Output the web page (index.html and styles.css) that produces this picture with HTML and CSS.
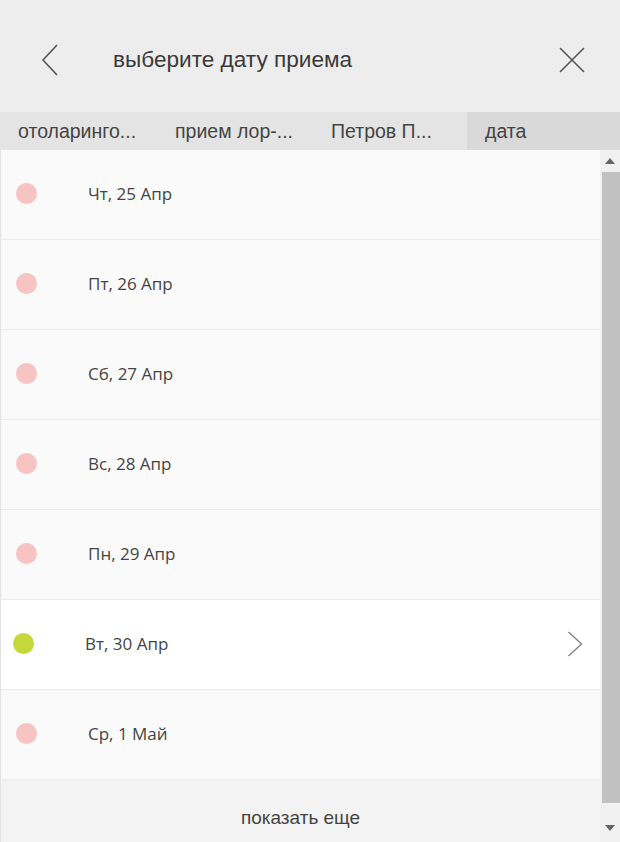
FILE: index.html
```html
<!DOCTYPE html>
<html lang="ru">
<head>
<meta charset="utf-8">
<title>выберите дату приема</title>
<link rel="stylesheet" href="styles.css">
</head>
<body>
<div class="app">
  <header class="header">
    <svg class="back" width="20" height="34" viewBox="0 0 20 34"><path d="M17 2 L3 17 L17 32" fill="none" stroke="#555" stroke-width="1.6"/></svg>
    <div class="title">выберите дату приема</div>
    <svg class="close" width="28" height="28" viewBox="0 0 28 28"><path d="M2 2 L26 26 M26 2 L2 26" fill="none" stroke="#555" stroke-width="1.6"/></svg>
  </header>
  <nav class="tabs">
    <div class="tab">отоларинго...</div>
    <div class="tab">прием лор-...</div>
    <div class="tab">Петров П...</div>
    <div class="tab active">дата</div>
  </nav>
  <div class="body">
    <div class="list">
      <div class="row"><span class="dot"></span><span class="date">Чт, 25 Апр</span></div>
      <div class="row"><span class="dot"></span><span class="date">Пт, 26 Апр</span></div>
      <div class="row"><span class="dot"></span><span class="date">Сб, 27 Апр</span></div>
      <div class="row"><span class="dot"></span><span class="date">Вс, 28 Апр</span></div>
      <div class="row"><span class="dot"></span><span class="date">Пн, 29 Апр</span></div>
      <div class="row selected"><span class="dot green"></span><span class="date">Вт, 30 Апр</span>
        <svg class="chev" width="16" height="26" viewBox="0 0 16 26"><path d="M1.5 1 L14.5 13 L1.5 25" fill="none" stroke="#888" stroke-width="1.5"/></svg>
      </div>
      <div class="row"><span class="dot"></span><span class="date">Ср, 1 Май</span></div>
      <div class="more">показать еще</div>
    </div>
    <div class="scrollbar">
      <div class="arrow up"></div>
      <div class="thumb"></div>
      <div class="arrow down"></div>
    </div>
  </div>
</div>
</body>
</html>
```
FILE: styles.css
```css
* { box-sizing: border-box; }
html, body { margin: 0; padding: 0; }
body { background: #ededed; font-family: "Liberation Sans", Arial, sans-serif; color: #333; }
.app { width: 620px; height: 842px; display: flex; flex-direction: column; overflow: hidden; }
.header { height: 112px; flex: none; display: flex; align-items: center; background: #ededed; padding: 8px 0 0 40px; }
.back { flex: none; }
.title { flex: 1; margin-left: 53px; font-size: 22.6px; color: #3a3a3a; }
.close { flex: none; margin-right: 34px; }
.tabs { height: 38px; flex: none; display: grid; grid-template-columns: 155px 156px 156px 153px; background: #e4e4e4; }
.tab { display: flex; align-items: center; padding-left: 18px; font-size: 19.5px; color: #444; white-space: nowrap; }
.tab:nth-child(2) { padding-left: 20px; }
.tab:nth-child(3) { padding-left: 20px; }
.tab.active { background: #d9d9d9; }
.body { flex: 1; display: flex; min-height: 0; }
.list { flex: 1; display: flex; flex-direction: column; background: #fafafa; border-left: 1px solid #e2e2e2; }
.row { height: 90px; flex: none; display: flex; align-items: center; border-bottom: 1px solid #ececec; padding-left: 15px; padding-bottom: 2px; font-family: "Open Sans", sans-serif; font-size: 17px; color: #444; }
.dot { width: 21px; height: 21px; border-radius: 50%; background: #f8c3c3; flex: none; }
.date { margin-left: 51px; }
.row.selected { background: #fff; padding-left: 12px; }
.dot.green { background: #c5d83b; }
.chev { margin-left: auto; margin-right: 17px; }
.more { flex: 1; display: flex; align-items: center; justify-content: center; padding-top: 14px; background: #f3f3f3; font-size: 19px; color: #444; }
.scrollbar { width: 20px; flex: none; display: flex; flex-direction: column; background: #f1f1f1; }
.arrow { height: 22px; flex: none; display: flex; align-items: center; justify-content: center; }
.arrow.up::before { content: ""; border-left: 5px solid transparent; border-right: 5px solid transparent; border-bottom: 6px solid #666; }
.arrow.down { height: 39px; align-items: flex-start; padding-top: 22px; }
.arrow.down::before { content: ""; border-left: 5px solid transparent; border-right: 5px solid transparent; border-top: 6px solid #666; }
.thumb { flex: 1; background: #c1c1c1; margin-left: 2px; }
```
